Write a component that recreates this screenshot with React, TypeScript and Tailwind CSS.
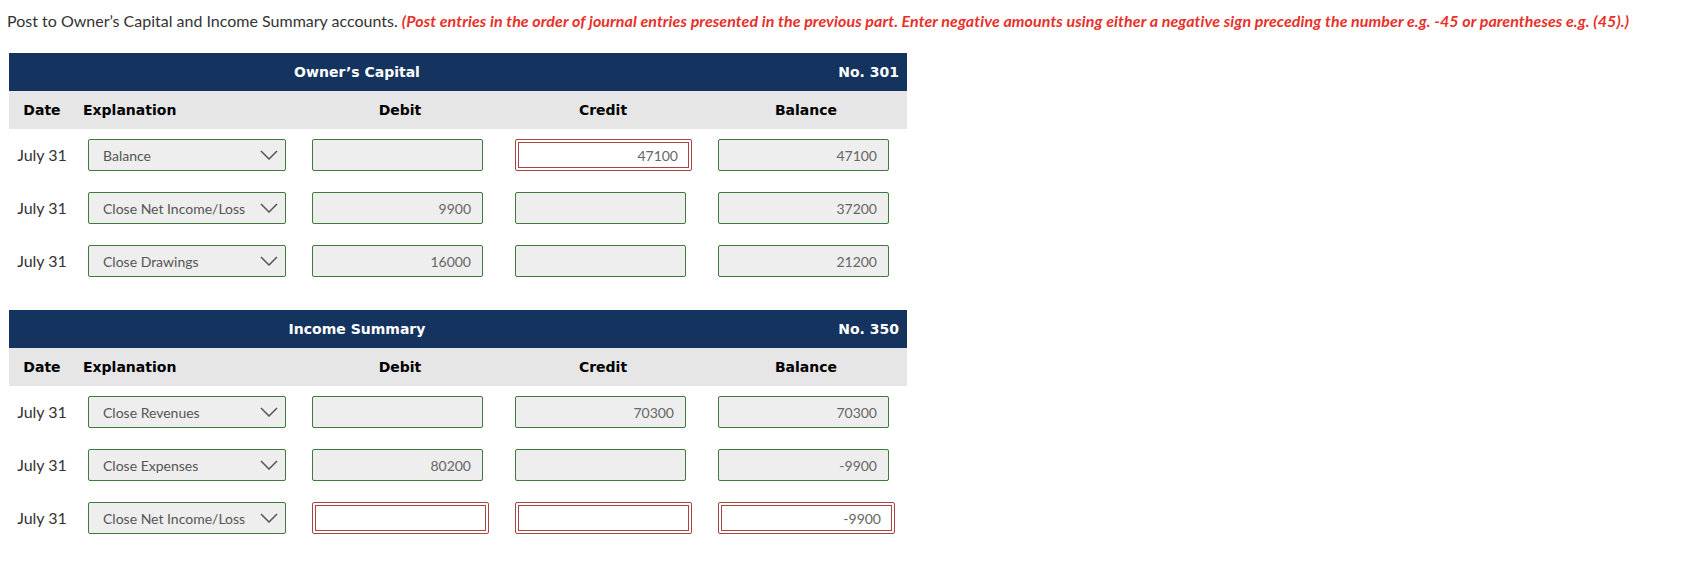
const navy = "bg-[#15335f]";

type Row = {
  expl: string;
  debit: string;
  credit: string;
  balance: string;
  bad?: ("debit" | "credit" | "balance")[];
};

const capital: Row[] = [
  { expl: "Balance", debit: "", credit: "47100", balance: "47100", bad: ["credit"] },
  { expl: "Close Net Income/Loss", debit: "9900", credit: "", balance: "37200" },
  { expl: "Close Drawings", debit: "16000", credit: "", balance: "21200" },
];

const summary: Row[] = [
  { expl: "Close Revenues", debit: "", credit: "70300", balance: "70300" },
  { expl: "Close Expenses", debit: "80200", credit: "", balance: "-9900" },
  {
    expl: "Close Net Income/Loss",
    debit: "",
    credit: "",
    balance: "-9900",
    bad: ["debit", "credit", "balance"],
  },
];

const Amount = ({ value, bad }: { value: string; bad?: boolean }) => {
  if (bad) {
    return (
      <div className="w-[177px] h-[32px] border border-[#a94442] bg-white p-[2px] rounded-[2px]">
        <div className="h-full border border-[#a94442] flex items-center justify-end pr-[10px] text-[14px] text-[#666]">
          {value}
        </div>
      </div>
    );
  }
  return (
    <div className="w-[171px] h-[32px] border border-[#3e7a3a] bg-[#eeeeee] rounded-[2px] flex items-center justify-end pr-[11px] text-[14px] text-[#666]">
      {value}
    </div>
  );
};

const Select = ({ value }: { value: string }) => (
  <div className="w-[198px] h-[32px] border border-[#3e7a3a] bg-[#eeeeee] rounded-[2px] flex items-center justify-between pl-[14px] pr-[7px] text-[14px] text-[#555]">
    <span>{value}</span>
    <svg width="18" height="10" viewBox="0 0 18 10" fill="none">
      <polyline points="1,1 9,9 17,1" stroke="#555" strokeWidth="1.5" />
    </svg>
  </div>
);

const Ledger = ({ title, no, rows }: { title: string; no: string; rows: Row[] }) => (
  <div className="w-[898px]">
    <div className={`${navy} h-[38px] flex items-center text-white font-bold text-[14px] font-['DejaVu_Sans',sans-serif]`}>
      <div className="w-[696px] text-center">{title}</div>
      <div className="flex-1 text-right pr-[8px]">{no}</div>
    </div>
    <div className="bg-[#e6e6e6] h-[38px] flex items-center text-black font-bold text-[14px] font-['DejaVu_Sans',sans-serif]">
      <div className="w-[66px] text-center">Date</div>
      <div className="w-[225px] pl-[8px]">Explanation</div>
      <div className="w-[200px] text-center">Debit</div>
      <div className="w-[206px] text-center">Credit</div>
      <div className="w-[200px] text-center">Balance</div>
    </div>
    {rows.map((r, i) => (
      <div key={i} className="h-[53px] pt-[10px]">
        <div className="flex items-center h-[32px]">
          <div className="w-[66px] text-center text-[16px] text-[#333]">July 31</div>
          <div className="w-[237px] pl-[13px]">
            <Select value={r.expl} />
          </div>
          <div className="w-[203px]">
            <Amount value={r.debit} bad={r.bad?.includes("debit")} />
          </div>
          <div className="w-[203px]">
            <Amount value={r.credit} bad={r.bad?.includes("credit")} />
          </div>
          <div className="w-[180px]">
            <Amount value={r.balance} bad={r.bad?.includes("balance")} />
          </div>
        </div>
      </div>
    ))}
  </div>
);

export default function App() {
  return (
    <div className="w-[1704px] h-[570px] bg-white font-['Lato',sans-serif] overflow-hidden">
      <p className="pt-[11px] pl-[7px] text-[16px] leading-[19px] text-[#333]">
        Post to Owner’s Capital and Income Summary accounts.{" "}
        <span className="text-[#e8302a] font-bold italic tracking-[0.08px]">
          (Post entries in the order of journal entries presented in the previous part. Enter negative amounts using either a negative sign preceding the number e.g. -45 or parentheses e.g. (45).)
        </span>
      </p>
      <div className="pl-[9px] pt-[23px]">
        <Ledger title="Owner’s Capital" no="No. 301" rows={capital} />
        <div className="h-[22px]" />
        <Ledger title="Income Summary" no="No. 350" rows={summary} />
      </div>
    </div>
  );
}
